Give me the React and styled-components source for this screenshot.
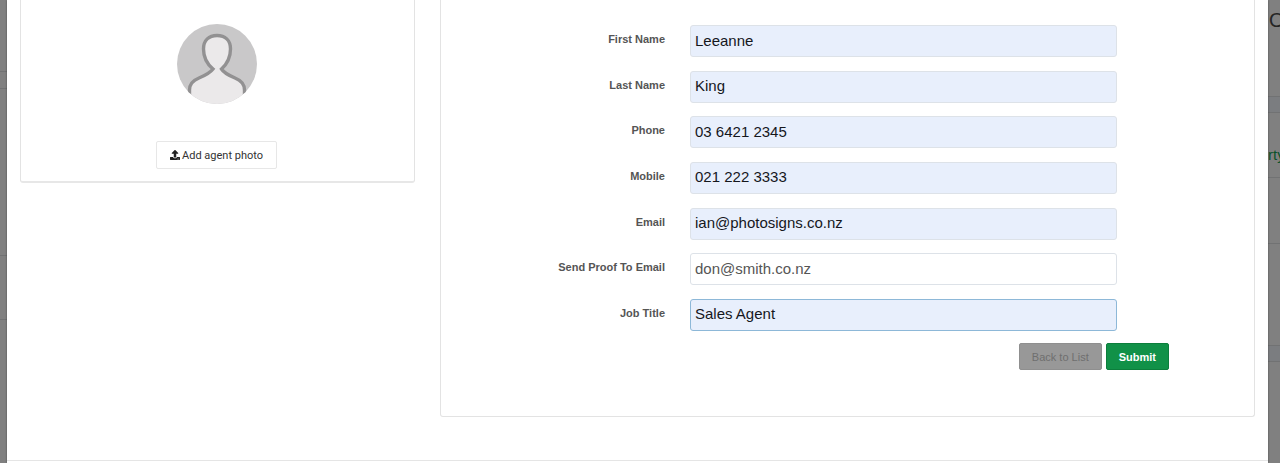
import React from 'react'
import styled, { createGlobalStyle } from 'styled-components'
import { FaUpload } from 'react-icons/fa'

const fields = [
	{ id: "firstName", label: "First Name", value: "Leeanne", type: "text", filled: true },
	{ id: "lastName", label: "Last Name", value: "King", type: "text", filled: true },
	{ id: "phone", label: "Phone", value: "03 6421 2345", type: "tel", filled: true },
	{ id: "mobile", label: "Mobile", value: "021 222 3333", type: "tel", filled: true },
	{ id: "email", label: "Email", value: "ian@photosigns.co.nz", type: "email", filled: true },
	{ id: "proofEmail", label: "Send Proof To Email", value: "don@smith.co.nz", type: "email", filled: false },
	{ id: "jobTitle", label: "Job Title", value: "Sales Agent", type: "text", filled: true, active: true }
]

export default function App() {
	const [values, setValues] = React.useState(
		Object.fromEntries(fields.map((field) => [field.id, field.value]))
	)

	function change(id, value) {
		setValues({ ...values, [id]: value })
	}

	return (
		<Page>
			<GlobalStyle />
			<Backdrop>
				<Strip $height={72} />
				<Strip $height={17} />
				<Strip $height={167} />
				<Strip $height={64} />
			</Backdrop>
			<Modal>
				<Columns>
					<PhotoCard>
						<Avatar />
						<UploadButton type="button"><FaUpload />Add agent photo</UploadButton>
					</PhotoCard>
					<FormCard onSubmit={(e) => e.preventDefault()}>
						<Fields>
							{fields.map((field) =>
								<Row key={field.id}>
									<Label htmlFor={field.id}>{field.label}</Label>
									<Input
										id={field.id}
										type={field.type}
										value={values[field.id]}
										onChange={(e) => change(field.id, e.target.value)}
										$filled={field.filled}
										$active={field.active}
									/>
								</Row>
							)}
						</Fields>
						<Actions>
							<BackButton type="button">Back to List</BackButton>
							<SubmitButton type="submit">Submit</SubmitButton>
						</Actions>
					</FormCard>
				</Columns>
				<Footer />
			</Modal>
			<Backdrop>
				<Strip $height={97}><PageTitle>O</PageTitle></Strip>
				<Strip $height={16} $band />
				<Strip $height={65}><PageLink href="#property">rty</PageLink></Strip>
				<Strip $height={66} />
				<Strip $height={102} />
				<Strip $height={16} $band />
			</Backdrop>
		</Page>
	)
}

function Avatar() {
	return (
		<AvatarImage viewBox="0 0 80 80" role="img" aria-label="Agent">
			<defs>
				<clipPath id="round"><circle cx="40" cy="40" r="40" /></clipPath>
			</defs>
			<g clipPath="url(#round)">
				<rect width="80" height="80" fill="#c9c8c9" />
				<path
					d="M12.500 84V66C12.500 60 17 56 22 54C28 51.500 33 49 36 45C30 40 26.500 33 26.500 25C26.500 16 32 11.500 40 11.500C48 11.500 53.500 16 53.500 25C53.500 33 50 40 44.500 45C47 49 52 51.500 58 54C63 56 67.500 60 67.500 66V84Z"
					fill="#ebe9ea"
					stroke="#929192"
					strokeWidth="3.4"
				/>
			</g>
		</AvatarImage>
	)
}

const GlobalStyle = createGlobalStyle`
* {
  box-sizing: border-box;
}
body {
  margin: 0;
  background: #808080;
  font-family: 'Liberation Sans', Arial, sans-serif;
}`

const Page = styled.div`
display: grid;
  grid-template-columns: 7px minmax(0, 1fr) 12px;
  min-height: 100vh;`

const Backdrop = styled.div`
background: #808080;
  overflow: hidden;
  contain: size;`

const Strip = styled.div`
height: ${(props) => props.$height}px;
  background: ${(props) => props.$band ? '#7b7d80' : 'transparent'};
  border-bottom: 1px solid #717273;
  display: flex;
  align-items: center;`

const PageTitle = styled.span`
align-self: flex-start;
  padding: 8px 0 0 1px;
  font-size: 20px;
  line-height: 24px;
  color: #252525;`

const PageLink = styled.a`
padding-top: 20px;
  font-size: 15px;
  line-height: 20px;
  color: #0b532b;
  text-decoration: none;`

const Modal = styled.main`
display: flex;
  flex-direction: column;
  background: #ffffff;
  box-shadow: 0 0 2px rgba(0, 0, 0, 0.4);
  position: relative;`

const Columns = styled.div`
display: grid;
  grid-template-columns: 395fr 815fr;
  gap: 25px;
  align-items: start;
  padding: 0 13px 43px;`

const PhotoCard = styled.section`
display: flex;
  flex-direction: column;
  align-items: center;
  gap: 37px;
  padding: 24px 14px 12px 12px;
  border: 1px solid #e3e3e3;
  border-top: 0;
  border-bottom: 2px solid #e7e7e7;
  border-radius: 0 0 3px 3px;`

const AvatarImage = styled.svg`
width: 80px;
  height: 80px;`

const UploadButton = styled.button`
display: flex;
  align-items: center;
  gap: 2px;
  height: 28px;
  padding: 0 13px;
  background: #ffffff;
  border: 1px solid #e7e7e7;
  border-radius: 2px;
  font-family: Roboto, sans-serif;
  font-size: 11px;
  color: #333333;
  svg{
    width: 10px;
    height: 10px;
    color: #222222;
  }`

const FormCard = styled.form`
padding: 25px 0 46px;
  border: 1px solid #e3e3e3;
  border-top: 0;
  border-radius: 0 0 3px 3px;`

const Fields = styled.div`
display: flex;
  flex-direction: column;
  justify-content: space-between;
  height: 306px;`

const Row = styled.div`
display: grid;
  grid-template-columns: 224fr 427fr 112fr;
  column-gap: 25px;`

const Label = styled.label`
padding-top: 6px;
  font-size: 11px;
  font-weight: 700;
  line-height: 16px;
  text-align: right;
  color: #555555;`

const Input = styled.input`
width: 100%;
  height: 32px;
  padding: 0 4px 2px;
  background: ${(props) => props.$filled ? '#e8effc' : '#ffffff'};
  border: 1px solid ${(props) => props.$active ? '#8db8d8' : '#dde2e8'};
  border-radius: 3px;
  outline: none;
  font-family: inherit;
  font-size: 15px;
  color: ${(props) => props.$filled ? '#15171c' : '#555555'};`

const Actions = styled.div`
display: flex;
  justify-content: flex-end;
  gap: 4px;
  padding: 12px 85px 0 0;`

const BackButton = styled.button`
height: 27px;
  padding: 0 12px;
  background: #989898;
  border: 1px solid #8f8f8f;
  border-radius: 2px;
  font-family: inherit;
  font-size: 11px;
  color: #6f6f6f;`

const SubmitButton = styled(BackButton)`
background: #119148;
  border-color: #0c7e3c;
  font-weight: 700;
  color: #ffffff;`

const Footer = styled.footer`
flex: 1;
  min-height: 3px;
  border-top: 1px solid #e5e5e5;`
